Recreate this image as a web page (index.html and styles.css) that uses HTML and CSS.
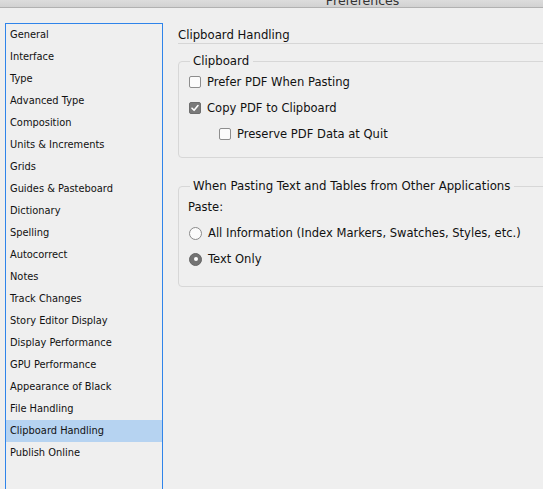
FILE: index.html
```html
<!DOCTYPE html>
<html>
<head>
<meta charset="utf-8">
<link rel="stylesheet" href="styles.css">
</head>
<body>
<div class="titlebar"><span class="title">Preferences</span></div>
<div class="main">
  <ul class="sidebar">
    <li>General</li>
    <li>Interface</li>
    <li>Type</li>
    <li>Advanced Type</li>
    <li>Composition</li>
    <li>Units &amp; Increments</li>
    <li>Grids</li>
    <li>Guides &amp; Pasteboard</li>
    <li>Dictionary</li>
    <li>Spelling</li>
    <li>Autocorrect</li>
    <li>Notes</li>
    <li>Track Changes</li>
    <li>Story Editor Display</li>
    <li>Display Performance</li>
    <li>GPU Performance</li>
    <li>Appearance of Black</li>
    <li>File Handling</li>
    <li class="selected">Clipboard Handling</li>
    <li>Publish Online</li>
  </ul>
  <div class="panel">
    <div class="heading">Clipboard Handling</div>
    <fieldset class="group group-clipboard">
      <legend>Clipboard</legend>
      <div class="row"><span class="check"></span><span>Prefer PDF When Pasting</span></div>
      <div class="row"><span class="check checked"><svg viewBox="0 0 12 12" width="12" height="12"><path d="M3 6.2 L5.1 8.3 L9 3.6" fill="none" stroke="#fff" stroke-width="1.6" stroke-linecap="round" stroke-linejoin="round"/></svg></span><span>Copy PDF to Clipboard</span></div>
      <div class="row indent"><span class="check"></span><span>Preserve PDF Data at Quit</span></div>
    </fieldset>
    <fieldset class="group group-paste">
      <legend>When Pasting Text and Tables from Other Applications</legend>
      <div class="row label">Paste:</div>
      <div class="row"><span class="radio"></span><span class="rtext">All Information (Index Markers, Swatches, Styles, etc.)</span></div>
      <div class="row"><span class="radio on"></span><span class="rtext">Text Only</span></div>
    </fieldset>
  </div>
</div>
</body>
</html>
```
FILE: styles.css
```css
html, body {
  margin: 0;
  padding: 0;
  overflow: hidden;
  height: 100%;
}
body {
  background: #efefef;
  font-family: "DejaVu Sans", "Noto Sans", sans-serif;
  color: #111;
}
.titlebar {
  height: 7px;
  border-bottom: 1px solid #b1b1b1;
  background: linear-gradient(#dcdcdc, #d2d2d2);
  overflow: hidden;
  display: flex;
  align-items: flex-end;
  justify-content: center;
  padding-left: 182px;
}
.title {
  font-size: 12.5px;
  line-height: 12px;
  color: #333;
  white-space: nowrap;
}
.main {
  display: flex;
  align-items: flex-start;
  padding-left: 5px;
}
.sidebar {
  list-style: none;
  margin: 15px 0 0 0;
  padding: 0;
  width: 156px;
  height: 480px;
  border: 1px solid #2f84ea;
  flex: none;
}
.sidebar li {
  height: 22px;
  line-height: 22px;
  padding-left: 4px;
  font-size: 9.85px;
  white-space: nowrap;
}
.sidebar li.selected {
  background: #b6d3f1;
}
.panel {
  margin-left: 15px;
  margin-top: 19px;
  width: 400px;
  flex: none;
}
.heading {
  font-size: 11.7px;
  height: 16px;
  line-height: 16px;
  border-bottom: 1px solid #d6d6d6;
  white-space: nowrap;
}
.group {
  margin: 0;
  border: 1px solid #d7d7d7;
  border-radius: 4px;
  padding: 0 0 0 9px;
  min-width: 0;
}
.group legend {
  font-size: 11.75px;
  line-height: 15px;
  padding: 0 4px 0 3px;
  margin-left: 2px;
  white-space: nowrap;
}
.group-clipboard {
  margin-top: 10px;
  padding-bottom: 10px;
}
.group-paste {
  margin-top: 21px;
  padding-bottom: 14px;
}
.row {
  height: 26px;
  display: flex;
  align-items: center;
  font-size: 11.55px;
  white-space: nowrap;
}
.check {
  width: 10px;
  height: 10px;
  border: 1px solid #8d8d8d;
  border-radius: 2px;
  background: #fbfbfb;
  margin: 0 6px 0 1px;
  flex: none;
  position: relative;
}
.check.checked {
  background: #7a7a7a;
  border-color: #6e6e6e;
}
.check svg {
  position: absolute;
  left: -1px;
  top: -1px;
}
.indent .check {
  margin-left: 31px;
}
.radio {
  width: 11px;
  height: 11px;
  border: 1px solid #8a8a8a;
  border-radius: 50%;
  background: #fbfbfb;
  margin: 0 6px 0 1px;
  flex: none;
  display: flex;
  align-items: center;
  justify-content: center;
}
.radio.on {
  background: #737373;
  border-color: #666;
}
.radio.on::after {
  content: "";
  width: 4px;
  height: 4px;
  border-radius: 50%;
  background: #fff;
}
```
